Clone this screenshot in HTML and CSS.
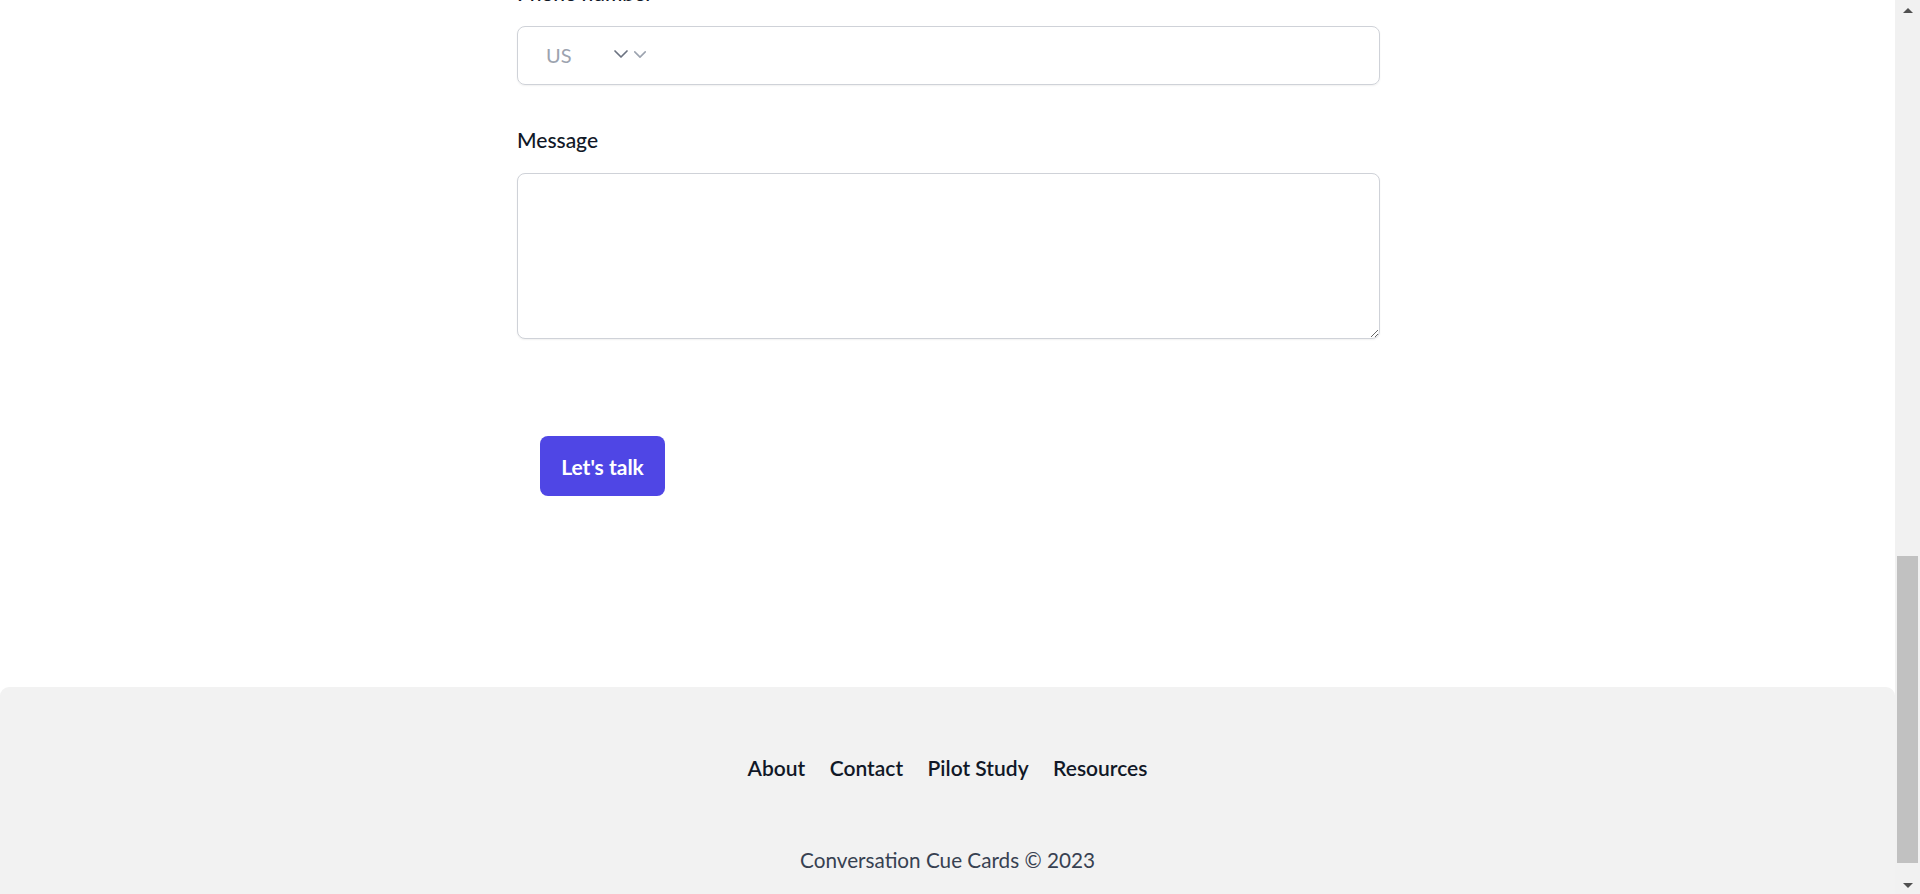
FILE: index.html
```html
<!DOCTYPE html>
<html lang="en">
<head>
<meta charset="utf-8">
<title>Contact – Conversation Cue Cards</title>
<link rel="stylesheet" href="styles.css">
</head>
<body>
<div class="viewport">
  <main class="page">
    <form class="form">
      <div class="field">
        <label class="label" for="phone">Phone number</label>
        <div class="phone-box">
          <div class="country">
            <span class="country-code">US</span>
            <svg class="chev chev-native" viewBox="0 0 16 10" aria-hidden="true"><path d="M2 2 L8 8 L14 2"/></svg>
            <svg class="chev chev-icon" viewBox="0 0 16 10" aria-hidden="true"><path d="M2 2 L8 8 L14 2"/></svg>
          </div>
          <input id="phone" class="phone-input" type="tel">
        </div>
      </div>
      <div class="field field-message">
        <label class="label" for="message">Message</label>
        <textarea id="message" class="textarea"></textarea>
      </div>
      <div class="actions">
        <button class="btn" type="button">Let's talk</button>
      </div>
    </form>
  </main>
  <footer class="footer">
    <nav class="footer-nav">
      <a href="#" class="footer-link">About</a>
      <a href="#" class="footer-link">Contact</a>
      <a href="#" class="footer-link">Pilot Study</a>
      <a href="#" class="footer-link">Resources</a>
    </nav>
    <p class="copyright">Conversation Cue Cards © 2023</p>
  </footer>
</div>
<div class="scrollbar" aria-hidden="true">
  <span class="sb-arrow sb-up"></span>
  <span class="sb-track"><span class="sb-thumb"></span></span>
  <span class="sb-arrow sb-down"></span>
</div>
</body>
</html>
```

FILE: styles.css
```css
* { box-sizing: border-box; }

html, body {
  margin: 0;
  padding: 0;
  height: 894px;
  overflow: hidden;
  background: #ffffff;
}

body {
  font-family: Lato, "Open Sans", "Liberation Sans", sans-serif;
  color: #111827;
}

.viewport {
  width: 1895px;
  height: 894px;
  display: flex;
  flex-direction: column;
}

.page {
  height: 687px;
  overflow: hidden;
  flex: none;
}

.form {
  width: 863px;
  margin: -22px 0 0 517px;
  display: flex;
  flex-direction: column;
}

.field {
  display: flex;
  flex-direction: column;
  gap: 17.5px;
}

.field-message {
  margin-top: 40.5px;
}

.label {
  font-size: 21px;
  line-height: 30px;
  font-weight: 500;
  color: #111827;
}

.phone-box {
  position: relative;
  height: 59px;
  border: 1.5px solid #cfd2d8;
  border-radius: 8px;
  box-shadow: 0 1px 2px rgba(0, 0, 0, 0.06);
  display: flex;
  align-items: center;
}

.country {
  display: flex;
  align-items: center;
  height: 100%;
  padding-left: 28px;
  flex: none;
  width: 150px;
}

.country-code {
  font-size: 20px;
  color: #9ca3af;
  width: 67px;
}

.chev {
  fill: none;
  stroke-linecap: round;
  stroke-linejoin: round;
}

.chev-native {
  width: 16px;
  height: 10px;
  stroke: #6b7280;
  stroke-width: 1.7;
  margin-top: -2px;
}

.chev-icon {
  width: 14px;
  height: 9px;
  stroke: #9ca3af;
  stroke-width: 1.8;
  margin-left: 4px;
  margin-top: -1px;
}

.phone-input {
  flex: 1;
  height: 100%;
  border: 0;
  outline: none;
  background: transparent;
  font: inherit;
}

.textarea {
  display: block;
  width: 863px;
  height: 166.5px;
  border: 1.5px solid #cfd2d8;
  border-radius: 8px;
  box-shadow: 0 1px 2px rgba(0, 0, 0, 0.06);
  resize: vertical;
  font: inherit;
  outline: none;
}

.actions {
  margin-top: 97px;
  padding-left: 23px;
}

.btn {
  width: 125px;
  height: 60px;
  border: 0;
  border-radius: 8px;
  background: #4f46e5;
  color: #ffffff;
  font-family: inherit;
  font-size: 21px;
  font-weight: 700;
  cursor: pointer;
}

.footer {
  flex: 1;
  background: #f2f2f2;
  border-radius: 9px 9px 0 0;
  display: flex;
  flex-direction: column;
  align-items: center;
  padding-top: 66px;
}

.footer-nav {
  display: flex;
  gap: 24.5px;
  height: 30px;
  align-items: center;
}

.footer-link {
  font-size: 21px;
  line-height: 30px;
  font-weight: 600;
  color: #111827;
  text-decoration: none;
}

.copyright {
  margin: 62px 0 0;
  font-size: 20.7px;
  line-height: 30px;
  color: #374151;
}

.scrollbar {
  position: fixed;
  top: 0;
  right: 0;
  width: 25px;
  height: 894px;
  background: #f1f1f1;
  display: flex;
  flex-direction: column;
  align-items: center;
}

.sb-arrow {
  flex: none;
  width: 0;
  height: 0;
  border-left: 5.5px solid transparent;
  border-right: 5.5px solid transparent;
}

.sb-up {
  margin-top: 8px;
  border-bottom: 5px solid #505050;
}

.sb-down {
  margin-bottom: 6px;
  border-top: 5px solid #505050;
}

.sb-track {
  flex: 1;
  width: 100%;
  position: relative;
}

.sb-thumb {
  position: absolute;
  left: 2px;
  right: 2px;
  top: 543px;
  height: 307px;
  background: #c1c1c1;
}
```
